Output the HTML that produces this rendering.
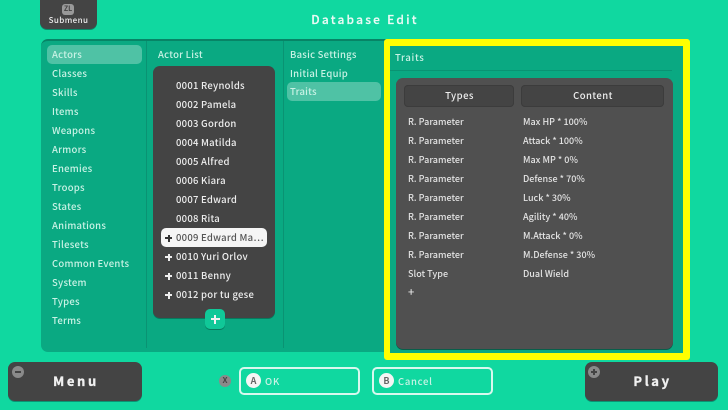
<!DOCTYPE html>
<html><head><meta charset="utf-8">
<style>
html,body{margin:0;padding:0}
body{width:728px;height:410px;overflow:hidden;position:relative;background:#10d8a0;font-family:"Noto Sans CJK JP","Liberation Sans",sans-serif;color:#e4f7f0}
div{position:absolute;box-sizing:border-box}
.t{font-size:9.5px;line-height:14px;height:14px;letter-spacing:.25px;white-space:nowrap;font-weight:500}
.s{color:#c9f2e5}
.l{margin-top:-1px}
.a{color:#eee}
.g{color:#e2e2e2;font-size:9px;letter-spacing:.02px;margin-top:.5px}
.h{letter-spacing:.45px;font-size:9.5px;padding-left:1px;box-shadow:inset 0 0 0 1px #3c3c3c}
.b{-webkit-text-stroke:.35px #f0f0f0}
</style></head><body>

<div style="left:40px;top:-8px;width:57px;height:37px;background:#444;border-radius:7px;box-shadow:0 1px 0 #0a8a6a"></div>
<div style="left:62px;top:4px;width:12px;height:11px;background:#999;border-radius:3px;color:#444;font-size:7px;line-height:11px;text-align:center;font-weight:700">ZL</div>
<div class="t" style="left:40px;width:57px;top:14px;text-align:center;font-size:8px;letter-spacing:.4px;color:#eee">Submenu</div>
<div class="t" style="left:265px;width:200px;top:11px;height:18px;line-height:18px;text-align:center;font-size:12px;letter-spacing:2.2px;color:#eafaf5;-webkit-text-stroke:.2px #eafaf5">Database Edit</div>

<div style="left:41px;top:39px;width:345px;height:313px;background:#0aa982;border-radius:7px 0 0 7px;border-top:2px solid #078466"></div>
<div style="left:146px;top:41px;width:1px;height:307px;background:#0a9373"></div>
<div style="left:283px;top:41px;width:1px;height:307px;background:#0a9373"></div>

<div style="left:47px;top:45px;width:95px;height:19px;background:#4fc2a5;border-radius:5px"></div>
<div class="t s l" style="left:52px;top:48px">Actors</div>
<div class="t s l" style="left:52px;top:67px">Classes</div>
<div class="t s l" style="left:52px;top:86px">Skills</div>
<div class="t s l" style="left:52px;top:105px">Items</div>
<div class="t s l" style="left:52px;top:124px">Weapons</div>
<div class="t s l" style="left:52px;top:143px">Armors</div>
<div class="t s l" style="left:52px;top:162px">Enemies</div>
<div class="t s l" style="left:52px;top:181px">Troops</div>
<div class="t s l" style="left:52px;top:200px">States</div>
<div class="t s l" style="left:52px;top:219px">Animations</div>
<div class="t s l" style="left:52px;top:238px">Tilesets</div>
<div class="t s l" style="left:52px;top:257px">Common Events</div>
<div class="t s l" style="left:52px;top:276px">System</div>
<div class="t s l" style="left:52px;top:295px">Types</div>
<div class="t s l" style="left:52px;top:314px">Terms</div>

<div class="t s" style="left:158px;top:47px">Actor List</div>
<div style="left:153px;top:66px;width:122px;height:252px;background:#444;border-radius:7px;box-shadow:0 1px 0 #077a5e"></div>
<div class="t a" style="left:176px;top:78px">0001 Reynolds</div>
<div class="t a" style="left:176px;top:97px">0002 Pamela</div>
<div class="t a" style="left:176px;top:116px">0003 Gordon</div>
<div class="t a" style="left:176px;top:135px">0004 Matilda</div>
<div class="t a" style="left:176px;top:154px">0005 Alfred</div>
<div class="t a" style="left:176px;top:173px">0006 Kiara</div>
<div class="t a" style="left:176px;top:192px">0007 Edward</div>
<div class="t a" style="left:176px;top:211px">0008 Rita</div>
<div style="left:161px;top:228px;width:106px;height:19px;background:#f5f5f5;border-radius:5px"></div>
<div class="t" style="left:176px;top:230px;color:#555">0009 Edward Ma⋯</div>
<div style="left:165px;top:237px;width:7px;height:2px;background:#333"></div>
<div style="left:167.5px;top:234.5px;width:2px;height:7px;background:#333"></div>
<div style="left:165px;top:256px;width:7px;height:2px;background:#eee"></div>
<div style="left:167.5px;top:253.5px;width:2px;height:7px;background:#eee"></div>
<div class="t a" style="left:176px;top:249px">0010 Yuri Orlov</div>
<div style="left:165px;top:275px;width:7px;height:2px;background:#eee"></div>
<div style="left:167.5px;top:272.5px;width:2px;height:7px;background:#eee"></div>
<div class="t a" style="left:176px;top:268px">0011 Benny</div>
<div style="left:165px;top:294px;width:7px;height:2px;background:#eee"></div>
<div style="left:167.5px;top:291.5px;width:2px;height:7px;background:#eee"></div>
<div class="t a" style="left:176px;top:287px">0012 por tu gese</div>
<div style="left:205px;top:309px;width:20px;height:20px;background:#10c898;border-radius:5px;box-shadow:0 1px 0 #077a5e"></div>
<div style="left:210.5px;top:318px;width:9px;height:2.4px;background:#f2f2f2"></div>
<div style="left:213.8px;top:314.5px;width:2.4px;height:9px;background:#f2f2f2"></div>

<div class="t s" style="left:290px;top:47px">Basic Settings</div>
<div class="t s" style="left:290px;top:66px">Initial Equip</div>
<div style="left:287px;top:82px;width:94px;height:19px;background:#4fc2a5;border-radius:5px"></div>
<div class="t s" style="left:290px;top:84px">Traits</div>

<div style="left:384px;top:39px;width:306px;height:321px;background:#0aa982;border:7px solid #ffff00;border-left-width:6px;border-radius:3px"></div>
<div class="t s" style="left:395px;top:50px;letter-spacing:.7px">Traits</div>
<div style="left:390px;top:70px;width:282px;height:1px;background:#0a9373"></div>

<div style="left:396px;top:78px;width:277px;height:271px;background:#505050;border-radius:7px;box-shadow:0 1px 0 #075f4a"></div>
<div class="t h" style="left:404px;top:85px;width:110px;height:22px;line-height:21px;background:#444;border-radius:4px;text-align:center;color:#eee">Types</div>
<div class="t h" style="left:521px;top:85px;width:143px;height:22px;line-height:21px;background:#444;border-radius:4px;text-align:center;color:#eee">Content</div>

<div class="t g" style="left:408px;top:114px">R. Parameter</div><div class="t g" style="left:523px;top:114px">Max HP * 100%</div>
<div class="t g" style="left:408px;top:133px">R. Parameter</div><div class="t g" style="left:523px;top:133px">Attack * 100%</div>
<div class="t g" style="left:408px;top:152px">R. Parameter</div><div class="t g" style="left:523px;top:152px">Max MP * 0%</div>
<div class="t g" style="left:408px;top:171px">R. Parameter</div><div class="t g" style="left:523px;top:171px">Defense * 70%</div>
<div class="t g" style="left:408px;top:190px">R. Parameter</div><div class="t g" style="left:523px;top:190px">Luck * 30%</div>
<div class="t g" style="left:408px;top:209px">R. Parameter</div><div class="t g" style="left:523px;top:209px">Agility * 40%</div>
<div class="t g" style="left:408px;top:228px">R. Parameter</div><div class="t g" style="left:523px;top:228px">M.Attack * 0%</div>
<div class="t g" style="left:408px;top:247px">R. Parameter</div><div class="t g" style="left:523px;top:247px">M.Defense * 30%</div>
<div class="t g" style="left:408px;top:266px">Slot Type</div><div class="t g" style="left:523px;top:266px">Dual Wield</div>
<div class="t g" style="left:408px;top:284px;font-size:11px">+</div>

<div style="left:8px;top:362px;width:134px;height:39px;background:#444;border-radius:7px;box-shadow:0 1px 0 #0a9373"></div>
<div style="left:12px;top:366px;width:12px;height:12px;background:#8a8a8a;border-radius:50%"></div>
<div style="left:15px;top:371px;width:6px;height:2px;background:#444"></div>
<div class="t b" style="left:9px;width:134px;top:371px;height:20px;line-height:20px;text-align:center;font-size:13px;font-weight:700;letter-spacing:2.6px;color:#f0f0f0">Menu</div>

<div style="left:585px;top:362px;width:133px;height:39px;background:#444;border-radius:7px;box-shadow:0 1px 0 #0a9373"></div>
<div style="left:588px;top:366px;width:12px;height:12px;background:#8a8a8a;border-radius:50%"></div>
<div style="left:591px;top:371px;width:6px;height:2px;background:#444"></div>
<div style="left:593px;top:369px;width:2px;height:6px;background:#444"></div>
<div class="t b" style="left:586px;width:133px;top:371px;height:20px;line-height:20px;text-align:center;font-size:13px;font-weight:700;letter-spacing:2.6px;color:#f0f0f0">Play</div>

<div style="left:219px;top:375px;width:12px;height:12px;background:#8a8a8a;border-radius:50%;color:#444;font-size:8px;line-height:12px;text-align:center;font-weight:700">X</div>

<div style="left:239px;top:367px;width:121px;height:28px;border:2px solid #d8f8ee;border-radius:5px"></div>
<div style="left:246px;top:373px;width:15px;height:15px;background:#f5f5f5;border-radius:50%;color:#666;font-size:9px;line-height:15px;text-align:center;font-weight:700">A</div>
<div class="t s" style="left:265px;top:374px;font-size:9.5px;letter-spacing:.8px">OK</div>

<div style="left:372px;top:367px;width:121px;height:28px;border:2px solid #d8f8ee;border-radius:5px"></div>
<div style="left:379px;top:373px;width:15px;height:15px;background:#f5f5f5;border-radius:50%;color:#666;font-size:9px;line-height:15px;text-align:center;font-weight:700">B</div>
<div class="t s" style="left:398px;top:374px;font-size:9.5px;letter-spacing:.7px">Cancel</div>

</body></html>
